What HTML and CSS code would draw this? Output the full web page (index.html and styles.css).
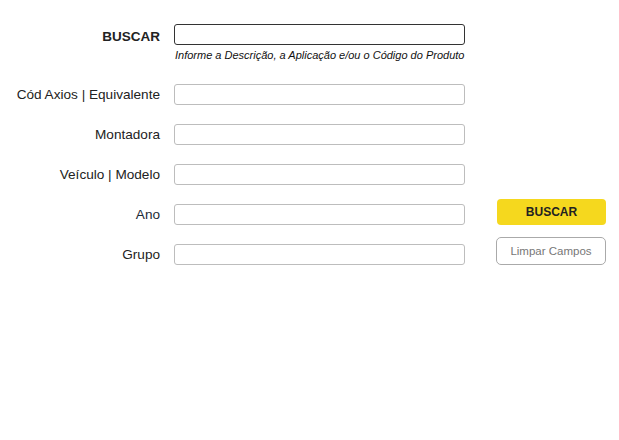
FILE: index.html
```html
<!DOCTYPE html>
<html lang="pt-BR">
<head>
<meta charset="utf-8">
<title>Buscar</title>
<link rel="stylesheet" href="styles.css">
</head>
<body>
<div class="page">
  <form class="fields">
    <label class="label label-main" for="q">BUSCAR</label>
    <div class="field-main">
      <input id="q" class="input input-focus" type="text">
      <div class="hint">Informe a Descrição, a Aplicação e/ou o Código do Produto</div>
    </div>

    <label class="label" for="cod">Cód Axios | Equivalente</label>
    <input id="cod" class="input" type="text">

    <label class="label" for="mont">Montadora</label>
    <input id="mont" class="input" type="text">

    <label class="label" for="veic">Veículo | Modelo</label>
    <input id="veic" class="input" type="text">

    <label class="label label-ano" for="ano">Ano</label>
    <input id="ano" class="input" type="text">

    <label class="label" for="grupo">Grupo</label>
    <input id="grupo" class="input" type="text">
  </form>
  <div class="actions">
    <button class="btn btn-primary" type="button">BUSCAR</button>
    <button class="btn btn-clear" type="button">Limpar Campos</button>
  </div>
</div>
</body>
</html>
```

FILE: styles.css
```css
* { box-sizing: border-box; }
html, body { margin: 0; padding: 0; background: #fff; }
body {
  font-family: "Liberation Sans", Arial, sans-serif;
  color: #222;
}
.page {
  display: flex;
  align-items: flex-start;
  padding-top: 24px;
}
.fields {
  display: grid;
  grid-template-columns: 160px 291px;
  column-gap: 14px;
  row-gap: 19px;
  align-items: center;
  margin: 0;
}
.label {
  text-align: right;
  font-size: 13.6px;
  color: #222;
  line-height: 21px;
}
.label-main {
  font-weight: bold;
  font-size: 13.5px;
  align-self: start;
  padding-top: 2px;
}
.label-ano { color: #1d2a38; }
.field-main {
  display: flex;
  flex-direction: column;
}
.input {
  display: block;
  width: 291px;
  height: 21px;
  margin: 0;
  padding: 0 6px;
  border: 1px solid #bdbdbd;
  border-radius: 3px;
  background: #fff;
  font: 13px "Liberation Sans", Arial, sans-serif;
  outline: none;
}
.input-focus { border-color: #333; }
.hint {
  font-style: italic;
  font-size: 11px;
  line-height: 13px;
  color: #111;
  padding: 4px 0 3px 1px;
}
.actions {
  display: flex;
  flex-direction: column;
  gap: 12px;
  margin-left: 31px;
  margin-top: 175px;
}
.btn {
  display: block;
  width: 110px;
  margin: 0;
  font-family: "Liberation Sans", Arial, sans-serif;
  cursor: pointer;
}
.btn-primary {
  height: 26px;
  margin-left: 1px;
  width: 109px;
  background: #f5d81e;
  border: none;
  border-radius: 4px;
  font-size: 12px;
  font-weight: bold;
  color: #222;
}
.btn-clear {
  height: 28px;
  background: #fff;
  border: 1px solid #aaa;
  border-radius: 5px;
  font-size: 11.5px;
  color: #777;
}
```
